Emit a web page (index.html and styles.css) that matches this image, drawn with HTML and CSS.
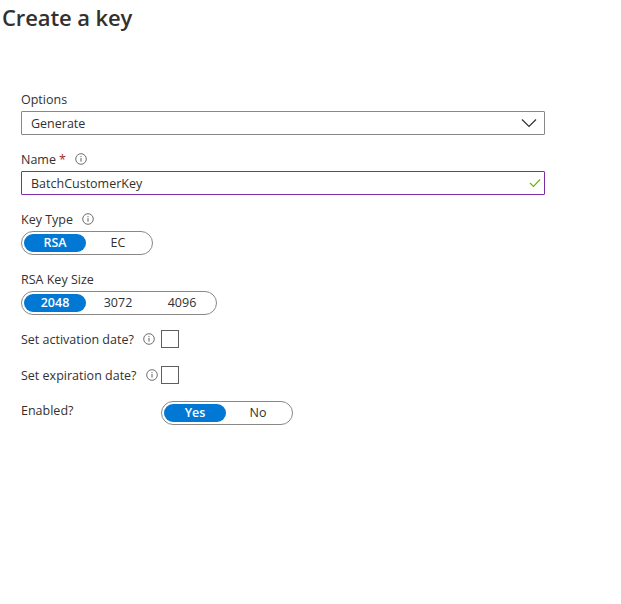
FILE: index.html
```html
<!DOCTYPE html>
<html>
<head>
<meta charset="utf-8">
<link rel="stylesheet" href="styles.css">
</head>
<body>
<h1 class="title">Create a key</h1>
<div class="form">
  <div class="field">
    <div class="label">Options</div>
    <div class="select">
      <span>Generate</span>
      <svg class="chev" width="16" height="10" viewBox="0 0 16 10"><path d="M1 1.5 L8 8.5 L15 1.5" fill="none" stroke="#323130" stroke-width="1.2"/></svg>
    </div>
  </div>
  <div class="field">
    <div class="label">Name <span class="req">*</span>
      <svg class="info" width="12" height="12" viewBox="0 0 12 12"><circle cx="6" cy="6" r="5.3" fill="none" stroke="#605e5c" stroke-width="0.9"/><rect x="5.5" y="5" width="1" height="3.6" fill="#605e5c"/><rect x="5.5" y="3.1" width="1" height="1" fill="#605e5c"/></svg>
    </div>
    <div class="input">
      <span>BatchCustomerKey</span>
      <svg class="check" width="12" height="10" viewBox="0 0 12 10"><path d="M1 5 L4.5 8.5 L11 1.5" fill="none" stroke="#6bb700" stroke-width="1.2"/></svg>
    </div>
  </div>
  <div class="field">
    <div class="label">Key Type
      <svg class="info" width="12" height="12" viewBox="0 0 12 12"><circle cx="6" cy="6" r="5.3" fill="none" stroke="#605e5c" stroke-width="0.9"/><rect x="5.5" y="5" width="1" height="3.6" fill="#605e5c"/><rect x="5.5" y="3.1" width="1" height="1" fill="#605e5c"/></svg>
    </div>
    <div class="pill">
      <span class="opt on">RSA</span><span class="opt">EC</span>
    </div>
  </div>
  <div class="field">
    <div class="label">RSA Key Size</div>
    <div class="pill">
      <span class="opt on">2048</span><span class="opt">3072</span><span class="opt">4096</span>
    </div>
  </div>
  <div class="row r-act">
    <div class="rlabel">Set activation date?
      <svg class="info" width="12" height="12" viewBox="0 0 12 12"><circle cx="6" cy="6" r="5.3" fill="none" stroke="#605e5c" stroke-width="0.9"/><rect x="5.5" y="5" width="1" height="3.6" fill="#605e5c"/><rect x="5.5" y="3.1" width="1" height="1" fill="#605e5c"/></svg>
    </div>
    <span class="box"></span>
  </div>
  <div class="row r-exp">
    <div class="rlabel">Set expiration date?
      <svg class="info" width="12" height="12" viewBox="0 0 12 12"><circle cx="6" cy="6" r="5.3" fill="none" stroke="#605e5c" stroke-width="0.9"/><rect x="5.5" y="5" width="1" height="3.6" fill="#605e5c"/><rect x="5.5" y="3.1" width="1" height="1" fill="#605e5c"/></svg>
    </div>
    <span class="box"></span>
  </div>
  <div class="row r-en">
    <div class="rlabel">Enabled?</div>
    <div class="pill">
      <span class="opt on">Yes</span><span class="opt">No</span>
    </div>
  </div>
</div>
</body>
</html>
```
FILE: styles.css
```css
html, body {
  margin: 0;
  padding: 0;
  background: #ffffff;
}
body {
  font-family: "Open Sans", "Noto Sans", "Liberation Sans", sans-serif;
  color: #323130;
  font-size: 12.5px;
}
.title {
  margin: 0;
  padding: 1px 0 0 2px;
  font-size: 22px;
  font-weight: 600;
  line-height: 32px;
  letter-spacing: -0.1px;
  color: #323130;
}
.form {
  padding: 57px 0 0 21px;
  width: 524px;
}
.field {
  margin-bottom: 15px;
}
.label {
  display: flex;
  align-items: center;
  height: 18px;
  margin-bottom: 3px;
  font-weight: 400;
  font-size: 12.5px;
}
.label .req {
  color: #a4262c;
  margin-left: 3px;
}
.label .info {
  margin-left: 9px;
}
.select, .input {
  box-sizing: border-box;
  height: 24px;
  display: flex;
  align-items: center;
  justify-content: space-between;
  padding: 0 7px 0 9px;
  border: 1px solid #8a8886;
  border-radius: 1px;
  background: #fff;
}
.input {
  border-color: #7d2ca6;
  padding-right: 3px;
}
.chev {
  display: block;
}
.check {
  display: block;
}
.pill {
  box-sizing: border-box;
  display: inline-flex;
  align-items: center;
  height: 24px;
  padding: 0 2px;
  border: 1px solid #8a8886;
  border-radius: 12px;
  background: #fff;
}
.opt {
  width: 64px;
  height: 18px;
  line-height: 18px;
  text-align: center;
  border-radius: 9px;
  font-size: 12.5px;
}
.opt.on {
  background: #0078d4;
  color: #fff;
  width: 62px;
  font-weight: 600;
}
.row {
  display: grid;
  grid-template-columns: 140px auto;
  align-items: center;
  justify-items: start;
  white-space: nowrap;
}
.rlabel {
  display: flex;
  align-items: center;
  font-weight: 400;
}
.rlabel .info {
  margin-left: 9px;
  flex: none;
}
.box {
  box-sizing: border-box;
  width: 18px;
  height: 18px;
  border: 1px solid #605e5c;
  background: #fff;
}
.r-act {
  margin-top: 15px;
}
.r-exp {
  margin-top: 18px;
}
.r-en {
  margin-top: 18px;
  align-items: start;
}
.r-en .pill {
  margin-top: -1px;
}
```
